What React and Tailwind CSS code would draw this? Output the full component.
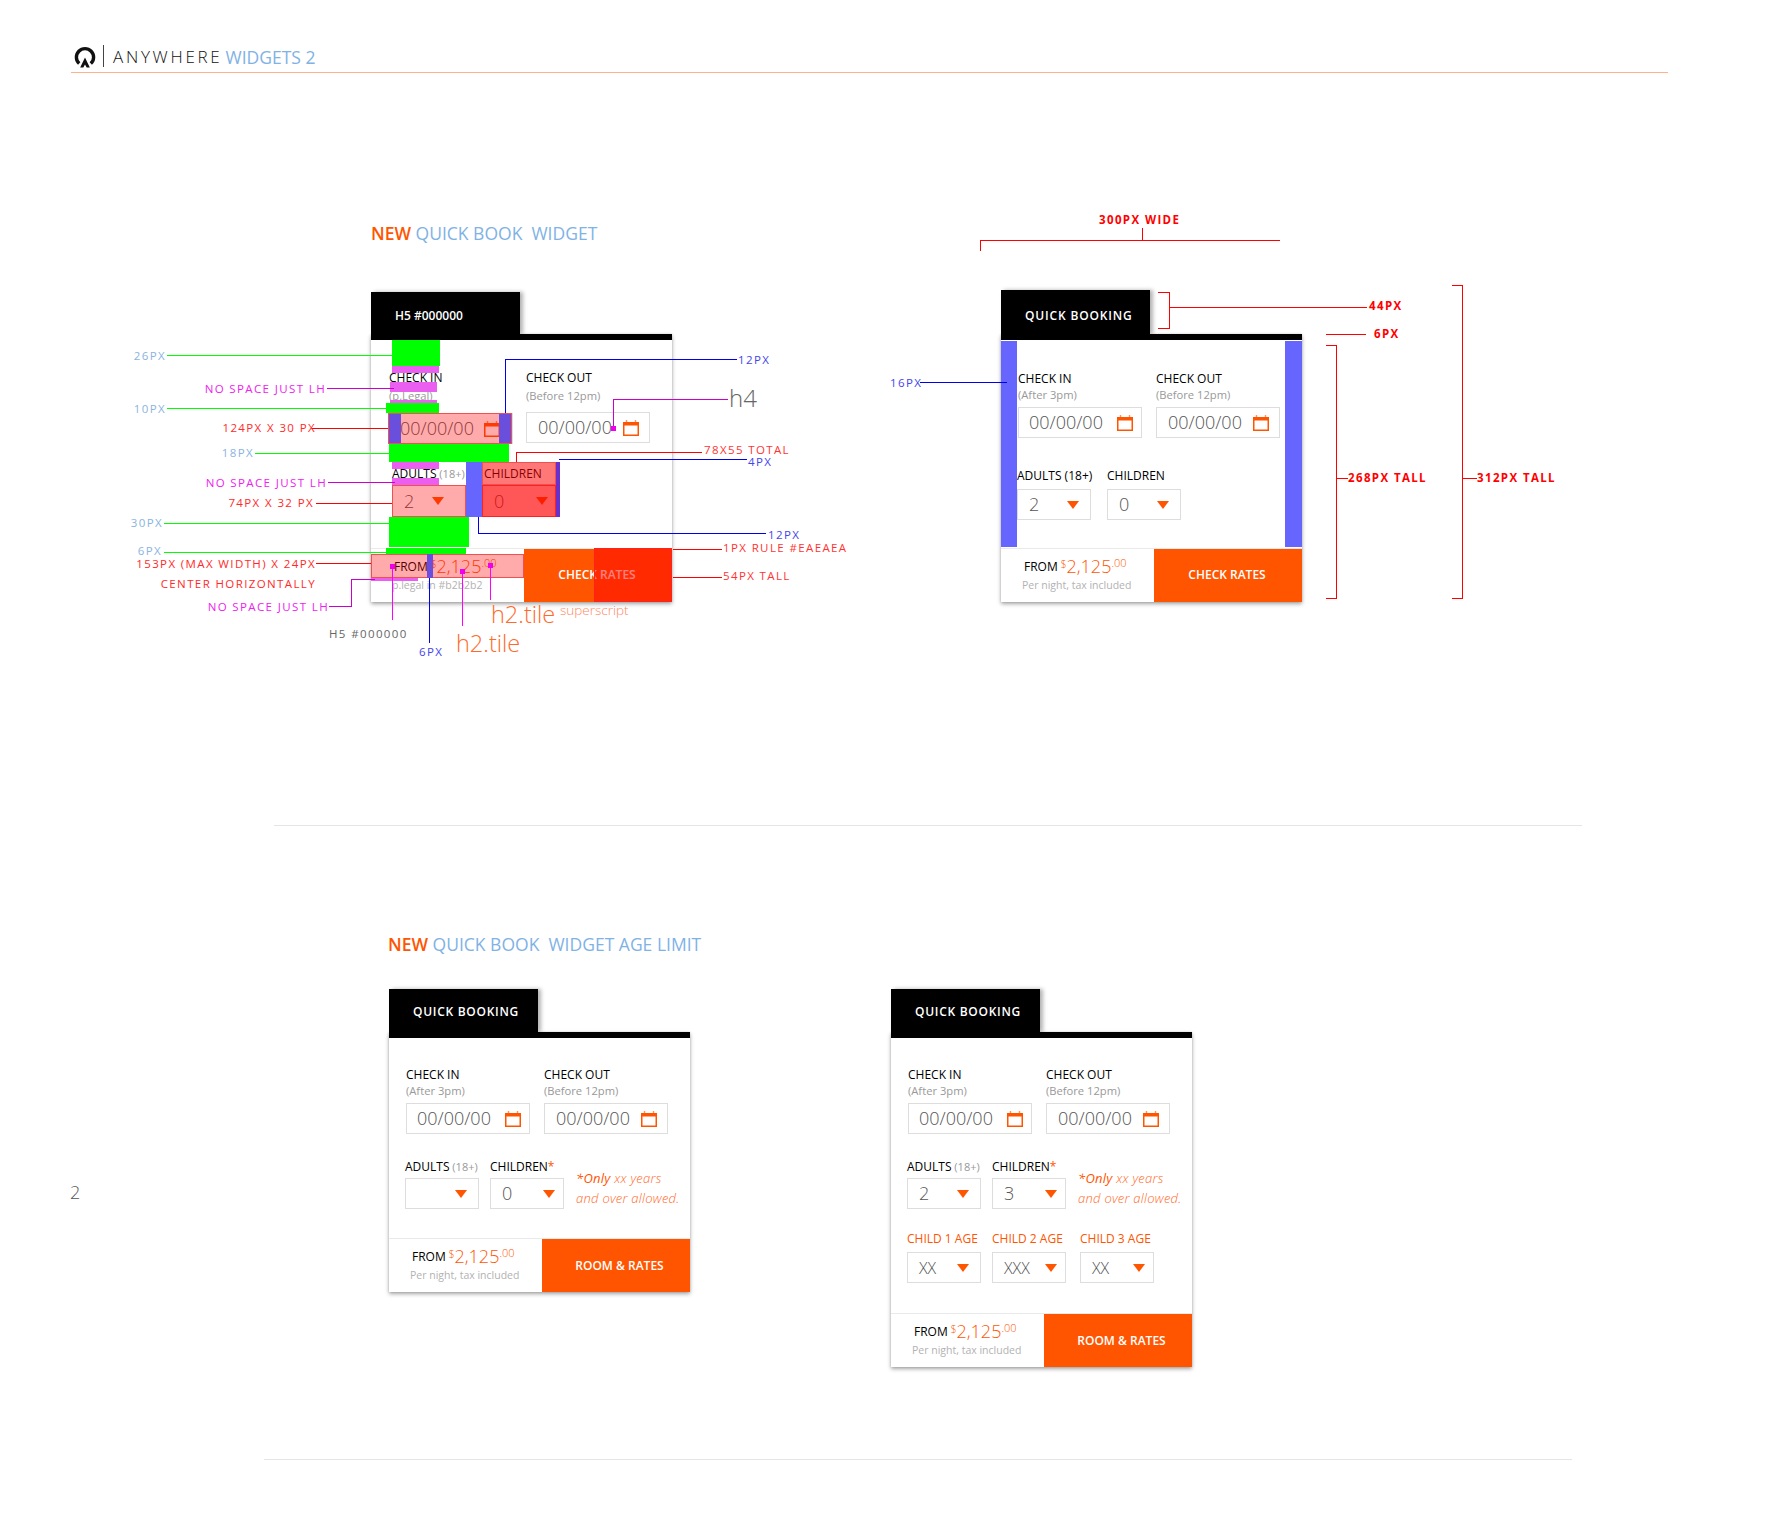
const ORANGE = 'text-[#ff5500]'
const NOTE = 'absolute -translate-y-1/2 whitespace-nowrap text-[11.5px] leading-none tracking-[0.12em]'
const NOTE_LEFT = 'absolute -translate-x-full -translate-y-1/2 whitespace-nowrap text-[11.5px] leading-none tracking-[0.12em]'

function Calendar() {
  return (
    <svg width="16" height="16" viewBox="0 0 16 16" className="shrink-0">
      <path d="M3.5 0v3M12.5 0v3" stroke="#ff9060" strokeWidth="1.4" />
      <rect x="0.75" y="2.75" width="14.5" height="12.5" fill="none" stroke="#ff5500" strokeWidth="1.5" />
      <rect x="0" y="2" width="16" height="3.5" fill="#ff5500" />
    </svg>
  )
}

function Caret() {
  return (
    <svg width="12" height="8" viewBox="0 0 12 8" className="shrink-0">
      <path d="M0 0h12L6 8z" fill="#ff5500" />
    </svg>
  )
}

function DateField({ label, sub, subGap = '', boxGap = 'mt-[4px]', boxPad = 'pl-[10px] pr-[8px]' }) {
  return (
    <div className="w-[124px]">
      <div className="text-[12px] leading-[16px] text-black">{label}</div>
      <div className={`text-[11.2px] leading-[16px] text-[#999999] ${subGap}`}>{sub}</div>
      <div className={`${boxGap} flex h-[31px] items-center justify-between border border-[#dddddd] ${boxPad}`}>
        <span className="text-[18px] font-light text-[#555555]">00/00/00</span>
        <Calendar />
      </div>
    </div>
  )
}

function Select({ label, value, small, tone = 'text-black', height = 'h-[31px]', gap = 'mt-[3px]', pad = 'pr-[11px]' }) {
  return (
    <div className="w-[74px]">
      <div className={`whitespace-nowrap text-[12px] leading-[16px] ${tone}`}>{label}</div>
      <div className={`${gap} flex ${height} items-center justify-between border border-[#dddddd] pl-[11px] ${pad}`}>
        <span className={`${small ? 'text-[16px]' : 'text-[18px]'} font-light text-[#555555]`}>{value}</span>
        <Caret />
      </div>
    </div>
  )
}

function Price() {
  return (
    <span className="font-light text-[#ff5500]">
      <sup className="text-[10px]">$</sup>
      <span className="text-[18px] leading-none">2,125</span>
      <sup className="text-[11px]">.00</sup>
    </span>
  )
}

function Footer({ cta, sub, ctaClass }) {
  return (
    <div className="flex h-[54px] border-t border-[#eaeaea]">
      <div className="flex w-[153px] flex-col pl-[23px] pt-[7px]">
        <div className="flex h-[22px] items-center gap-[3px] text-[12px] text-black">
          FROM <Price />
        </div>
        <div className="-ml-[2px] text-[10.5px] leading-[14px] text-[#b2b2b2]">{sub}</div>
      </div>
      <div className={`flex flex-1 items-center justify-center bg-[#ff5500] text-[12px] font-semibold text-white ${ctaClass}`}>{cta}</div>
    </div>
  )
}

function Widget({ className = '', tab, tabClass = 'h-[43px] pt-[3px] tracking-[0.06em]', children, cta = 'ROOM & RATES', ctaClass = 'pl-[7px]', sub = 'Per night, tax included' }) {
  return (
    <div className={`w-[301px] shrink-0 ${className}`}>
      <div className={`flex w-[149px] items-center bg-black pl-[24px] text-[12px] font-semibold text-white shadow-[3px_0_4px_rgba(0,0,0,0.3)] ${tabClass}`}>
        {tab}
      </div>
      <div className="relative border-t-[6px] border-black bg-white shadow-[0_2px_4px_rgba(0,0,0,0.35),0_0_2px_rgba(0,0,0,0.12)]">
        {children}
        <Footer cta={cta} sub={sub} ctaClass={ctaClass} />
      </div>
    </div>
  )
}

function Note() {
  return (
    <div className="ml-px mt-[9px] w-[100px] whitespace-nowrap text-[13px] italic leading-[20px] tracking-[0.02em] text-[#ff6a2a]">
      <div><span className="font-medium text-[#ff5500]">*Only</span> <span className="font-light">xx years</span></div>
      <div className="font-light">and over allowed.</div>
    </div>
  )
}

function Star() {
  return <span className={ORANGE}>*</span>
}

function Age() {
  return <span className="text-[11px] text-[#999999]"> (18+)</span>
}

function Box({ className }) {
  return <div className={`absolute ${className}`} />
}

function Logo() {
  return (
    <svg width="22" height="22" viewBox="0 0 22 22">
      <path d="M5.2 17.6A8.6 8.6 0 1 1 16.8 17.6" fill="none" stroke="#111111" strokeWidth="3.4" />
      <path d="M11 11.5L6.2 21.5H9.3L11 18.4L12.7 21.5H15.8z" fill="#111111" />
    </svg>
  )
}

function Title({ className, rest }) {
  return (
    <div className={`whitespace-pre text-[17.5px] leading-[24px] text-[#7fb2e5] ${className}`}>
      <span className="font-semibold text-[#ff5500]">NEW</span> {rest}
    </div>
  )
}

export default function App() {
  return (
    <div className="relative h-[1518px] w-[1781px] overflow-hidden bg-white pt-[45px] font-['Open_Sans',sans-serif]">
      {/* page header */}
      <div className="ml-[71px] flex h-[28px] w-[1597px] items-start border-b border-[#ffb18a]">
        <div className="ml-[3px] mt-[1px]"><Logo /></div>
        <div className="ml-[7px] h-[22px] w-px bg-[#444444]" />
        <span className="ml-[9px] mt-[1px] text-[17px] font-light leading-[22px] tracking-[0.16em] text-[#111111]">ANYWHERE</span>
        <span className="ml-[3px] mt-[1px] text-[17.5px] leading-[22px] text-[#7fb2e5]">WIDGETS 2</span>
      </div>

      <Title className="ml-[371px] mt-[148px]" rest="QUICK BOOK  WIDGET" />

      <div className="ml-[371px] mt-[45px] flex items-start gap-[329px]">
        <Widget className="mt-[2px]" tab="H5 #000000" tabClass="h-[42px] pt-[6px]" cta="CHECK RATES" ctaClass="pb-[2px] pr-[2px]" sub="p.legal in #b2b2b2">
          <div className="h-[208px] pl-[18px] pt-[30px]">
            <div className="flex gap-[13px]">
              <DateField label="CHECK IN" sub="(p.Legal)" subGap="mt-[2px]" boxGap="mt-[9px]" boxPad="pl-[10px] pr-[12px]" />
              <DateField label="CHECK OUT" sub="(Before 12pm)" subGap="mt-[2px]" boxGap="mt-[8px]" boxPad="pl-[11px] pr-[10px]" />
            </div>
            <div className="ml-[3px] mt-[22px] flex gap-[16px]">
              <Select label={<>ADULTS<Age /></>} value="2" height="h-[32px]" pad="pr-[21px]" />
              <Select label={<span className="pl-[2px]">CHILDREN</span>} value="0" height="h-[32px]" pad="pr-[7px]" />
            </div>
          </div>
        </Widget>

        <Widget tab="QUICK BOOKING" tabClass="h-[44px] pt-[8px] tracking-[0.07em]" cta="CHECK RATES" ctaClass="pb-[2px] pr-[2px]">
          <div className="h-[208px] pl-[17px] pt-[31px]">
            <div className="flex gap-[14px]">
              <DateField label="CHECK IN" sub="(After 3pm)" />
              <DateField label="CHECK OUT" sub="(Before 12pm)" boxPad="pl-[11px] pr-[10px]" />
            </div>
            <div className="-ml-px mt-[30px] flex gap-[16px]">
              <Select label="ADULTS (18+)" value="2" gap="mt-[5px]" />
              <Select label="CHILDREN" value="0" gap="mt-[5px]" />
            </div>
          </div>
        </Widget>
      </div>

      <div className="ml-[274px] mt-[223px] h-px w-[1308px] bg-[#e5e5e5]" />

      <Title className="ml-[388px] mt-[106px]" rest="QUICK BOOK  WIDGET AGE LIMIT" />

      <div className="mt-[33px] flex items-start pl-[70px]">
        <div className="mt-[190px] w-[319px] shrink-0 text-[18px] font-light leading-[26px] text-[#555555]">2</div>

        <Widget tab="QUICK BOOKING">
          <div className="h-[200px] pl-[17px] pt-[29px]">
            <div className="flex gap-[14px]">
              <DateField label="CHECK IN" sub="(After 3pm)" />
              <DateField label="CHECK OUT" sub="(Before 12pm)" boxPad="pl-[11px] pr-[10px]" />
            </div>
            <div className="-ml-px mt-[25px] flex gap-[11px]">
              <Select label={<>ADULTS<Age /></>} value="" />
              <Select label={<>CHILDREN<Star /></>} value="0" pad="pr-[8px]" />
              <Note />
            </div>
          </div>
        </Widget>

        <Widget className="ml-[201px]" tab="QUICK BOOKING">
          <div className="h-[275px] pl-[17px] pt-[29px]">
            <div className="flex gap-[14px]">
              <DateField label="CHECK IN" sub="(After 3pm)" />
              <DateField label="CHECK OUT" sub="(Before 12pm)" boxPad="pl-[11px] pr-[10px]" />
            </div>
            <div className="-ml-px mt-[25px] flex gap-[11px]">
              <Select label={<>ADULTS<Age /></>} value="2" />
              <Select label={<>CHILDREN<Star /></>} value="3" pad="pr-[8px]" />
              <Note />
            </div>
            <div className="-ml-px mt-[22px] flex">
              <Select label="CHILD 1 AGE" value="XX" small tone={ORANGE} gap="mt-[5px]" />
              <div className="ml-[11px]"><Select label="CHILD 2 AGE" value="XXX" small tone={ORANGE} gap="mt-[5px]" pad="pr-[8px]" /></div>
              <div className="ml-[14px]"><Select label="CHILD 3 AGE" value="XX" small tone={ORANGE} gap="mt-[5px]" pad="pr-[8px]" /></div>
            </div>
          </div>
        </Widget>
      </div>

      <div className="ml-[264px] mt-[92px] h-px w-[1308px] bg-[#e5e5e5]" />

      {/* spec overlays */}
      <Box className="left-[392px] top-[340px] h-[26px] w-[48px] bg-[#00ff00]" />
      <Box className="left-[392px] top-[366px] h-[7px] w-[47px] bg-[#ea5ff0]" />
      <Box className="left-[390px] top-[382px] h-[10px] w-[47px] bg-[#ea5ff0]" />
      <Box className="left-[390px] top-[400px] h-[3px] w-[47px] bg-[#ea5ff0]" />
      <Box className="left-[386px] top-[403px] h-[10px] w-[53px] bg-[#00ff00]" />
      <Box className="left-[388px] top-[413px] h-[31px] w-[124px] border border-[#f05050] bg-[#ff0000]/33" />
      <Box className="left-[389px] top-[414px] h-[29px] w-[12px] bg-[#6a4fdd]" />
      <Box className="left-[499px] top-[414px] h-[29px] w-[12px] bg-[#6a4fdd]" />
      <Box className="left-[389px] top-[444px] h-[18px] w-[120px] bg-[#00ff00]" />
      <Box className="left-[392px] top-[462px] h-[7px] w-[47px] bg-[#ea5ff0]" />
      <Box className="left-[392px] top-[478px] h-[7px] w-[47px] bg-[#ea5ff0]" />
      <Box className="left-[392px] top-[485px] h-[32px] w-[74px] border border-[#f05050] bg-[#ff0000]/33" />
      <Box className="left-[466px] top-[462px] h-[55px] w-[16px] bg-[#6666ff]" />
      <Box className="left-[482px] top-[462px] h-[23px] w-[74px] border border-[#f05050] bg-[#ff0000]/53" />
      <Box className="left-[482px] top-[485px] h-[32px] w-[74px] border border-[#ff2020] bg-[#ff0000]/66" />
      <Box className="left-[556px] top-[462px] h-[55px] w-[4px] bg-[#6a30cc]" />
      <Box className="left-[389px] top-[517px] h-[30px] w-[80px] bg-[#00ff00]" />
      <Box className="left-[386px] top-[548px] h-[6px] w-[80px] bg-[#00ff00]" />
      <Box className="left-[371px] top-[554px] h-[24px] w-[153px] border border-[#f05050] bg-[#ff0000]/33" />
      <Box className="left-[427px] top-[554px] h-[24px] w-[6px] bg-[#6a4fdd]" />
      <Box className="left-[371px] top-[578px] h-[3px] w-[47px] bg-[#ea5ff0]" />
      <Box className="left-[594px] top-[548px] h-[54px] w-[78px] border border-[#ff2020] bg-[#ff0000]/50" />
      <Box className="left-[1001px] top-[341px] h-[206px] w-[16px] bg-[#6666ff]" />
      <Box className="left-[1285px] top-[341px] h-[206px] w-[17px] bg-[#6666ff]" />

      {/* leader lines */}
      <svg width="1781" height="1518" className="pointer-events-none absolute left-0 top-0" shapeRendering="crispEdges">
        <g stroke="#00ff00" fill="none">
          <path d="M167 355.5H392M167 408.5H386M255 453.5H389M164 523.5H389M164 552.5H386" />
        </g>
        <g stroke="#cc00cc" fill="none">
          <path d="M327 388.5H394M328 482.5H395M329 606.5H351.5V579.5H375M613.5 428V399.5H728" />
          <path d="M392.5 566V620M462.5 571V626M490.5 565V600" stroke="#ff00ff" />
        </g>
        <g fill="#ee00ee">
          <rect x="390" y="564" width="5" height="5" />
          <rect x="460" y="569" width="5" height="5" />
          <rect x="488" y="563" width="5" height="5" />
          <rect x="611" y="426" width="5" height="5" />
        </g>
        <g stroke="#ff0000" fill="none">
          <path d="M312 428.5H388M316 503.5H392M316 563.5H371M516.5 462V452.5H702M673 549.5H722M673 577.5H722" />
          <path d="M980.5 251V240.5H1280M1142.5 228V240" />
          <path d="M1158 292.5H1169.5V328.5H1158M1169.5 307.5H1367M1326 334.5H1366" />
          <path d="M1326 345.5H1336.5V598.5H1326M1336.5 478.5H1348M1452 285.5H1462.5V598.5H1452M1462.5 478.5H1477" />
        </g>
        <g stroke="#0000ee" fill="none">
          <path d="M505.5 413V359.5H737M559 459.5H747M478.5 517V533.5H766M429.5 578V643M920 382.5H1007" />
        </g>
      </svg>

      {/* annotation text */}
      <span className={`${NOTE_LEFT} left-[166px] top-[356px] text-[#8ab4e0]`}>26PX</span>
      <span className={`${NOTE_LEFT} left-[326px] top-[389px] text-[#ee22ee]`}>NO SPACE JUST LH</span>
      <span className={`${NOTE_LEFT} left-[166px] top-[409px] text-[#8ab4e0]`}>10PX</span>
      <span className={`${NOTE_LEFT} left-[316px] top-[428px] text-[#ff2a2a]`}>124PX X 30 PX</span>
      <span className={`${NOTE_LEFT} left-[254px] top-[453px] text-[#8ab4e0]`}>18PX</span>
      <span className={`${NOTE_LEFT} left-[327px] top-[483px] text-[#ee22ee]`}>NO SPACE JUST LH</span>
      <span className={`${NOTE_LEFT} left-[314px] top-[503px] text-[#ff2a2a]`}>74PX X 32 PX</span>
      <span className={`${NOTE_LEFT} left-[163px] top-[523px] text-[#8ab4e0]`}>30PX</span>
      <span className={`${NOTE_LEFT} left-[162px] top-[551px] text-[#8ab4e0]`}>6PX</span>
      <span className={`${NOTE_LEFT} left-[316px] top-[564px] text-[#ff2a2a]`}>153PX (MAX WIDTH) X 24PX</span>
      <span className={`${NOTE_LEFT} left-[316px] top-[584px] text-[#ff2a2a]`}>CENTER HORIZONTALLY</span>
      <span className={`${NOTE_LEFT} left-[329px] top-[607px] text-[#ee22ee]`}>NO SPACE JUST LH</span>
      <span className={`${NOTE} left-[329px] top-[634px] text-[#666666]`}>H5 #000000</span>
      <span className={`${NOTE} left-[419px] top-[652px] text-[#4444ee]`}>6PX</span>
      <span className={`${NOTE} left-[738px] top-[360px] text-[#4444ee]`}>12PX</span>
      <span className={`${NOTE} left-[704px] top-[450px] text-[#ff3333]`}>78X55 TOTAL</span>
      <span className={`${NOTE} left-[748px] top-[462px] text-[#4444ee]`}>4PX</span>
      <span className={`${NOTE} left-[768px] top-[535px] text-[#4444ee]`}>12PX</span>
      <span className={`${NOTE} left-[723px] top-[548px] text-[#ff3333]`}>1PX RULE #EAEAEA</span>
      <span className={`${NOTE} left-[723px] top-[576px] text-[#ff3333]`}>54PX TALL</span>
      <span className={`${NOTE} left-[890px] top-[383px] text-[#4444ee]`}>16PX</span>
      <span className={`${NOTE} left-[1099px] top-[220px] font-bold text-[#ff0000]`}>300PX WIDE</span>
      <span className={`${NOTE} left-[1369px] top-[306px] font-bold text-[#ff0000]`}>44PX</span>
      <span className={`${NOTE} left-[1374px] top-[334px] font-bold text-[#ff0000]`}>6PX</span>
      <span className={`${NOTE} left-[1348px] top-[478px] font-bold text-[#ff0000]`}>268PX TALL</span>
      <span className={`${NOTE} left-[1477px] top-[478px] font-bold text-[#ff0000]`}>312PX TALL</span>

      <span className="absolute left-[729px] top-[398px] -translate-y-1/2 text-[24px] font-light leading-none text-[#666666]">h4</span>
      <span className="absolute left-[491px] top-[615px] -translate-y-1/2 text-[23.5px] font-light leading-none text-[#ff6a2a]">h2.tile</span>
      <span className="absolute left-[456px] top-[644px] -translate-y-1/2 text-[23.5px] font-light leading-none text-[#ff6a2a]">h2.tile</span>
      <span className="absolute left-[560px] top-[611px] -translate-y-1/2 text-[13.5px] font-light leading-none text-[#ff8866]">superscript</span>
    </div>
  )
}
